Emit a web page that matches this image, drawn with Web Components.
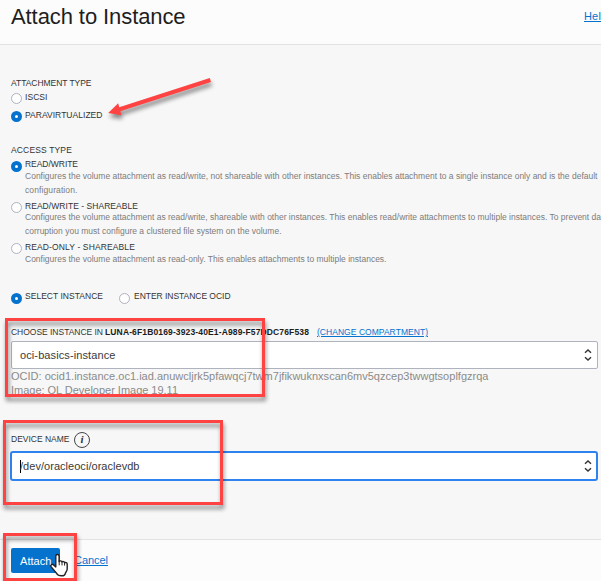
<!DOCTYPE html>
<html lang="en"><head><meta charset="utf-8"><title>Attach to Instance</title>
<style>
html,body{margin:0;width:601px;height:581px;overflow:hidden}
body{font-family:"Liberation Sans",Arial,sans-serif;background:#f7f7f7;color:#333}
</style></head><body>
<attach-dialog></attach-dialog>
<script>
const define=(name,html,setup)=>customElements.define(name,class extends HTMLElement{
  connectedCallback(){
    if(this.shadowRoot)return;
    this.attachShadow({mode:'open'}).innerHTML=html;
    if(setup)setup(this,this.shadowRoot);
  }
});
/* Single line of text, tracked to the width given in "w". */
define('fit-text',`<style>:host{display:inline-block;white-space:nowrap;vertical-align:top}</style><slot></slot>`,(el)=>{
  const w=+el.getAttribute('w');
  if(w){const n=el.textContent.length;el.style.letterSpacing=((w-el.getBoundingClientRect().width)/n).toFixed(4)+'px';}
});
define('ui-radio',`<style>
:host{display:grid;grid-template-columns:14px max-content;font-size:8.5px;line-height:12px;color:#333}
i{box-sizing:border-box;width:11px;height:11px;border-radius:50%;border:1px solid #adb3be;background:#fff;margin-top:var(--dot,2px)}
:host([checked]) i{border:4px solid #0572ce}
.note{display:flex;flex-direction:column;align-items:flex-start;line-height:14px;color:#7c7c7c;margin-top:var(--note,-1px)}
</style><i></i><div><slot></slot><div class="note"><slot name="note"></slot></div></div>`);
define('ui-select',`<style>
:host{display:flex;box-sizing:border-box;align-items:center;justify-content:space-between;width:587px;height:28px;padding:0 5px 0 8px;border:1px solid #aeb3bd;border-radius:2px;background:#fff;font-size:11px;color:#3a3a3a}
:host([focused]){width:588px;height:30px;border:2px solid #2f83ef;border-radius:3px;padding-right:4px}
:host([focused]) span{border-left:1px solid #000;line-height:13px}
:host([focused]) ::slotted(*){margin-left:-1px}
svg{display:block}
</style><span><slot></slot></span><svg width="8" height="14" viewBox="0 0 8 14" fill="none" stroke="#333" stroke-width="1.4"><path d="M1 4.8 4 2 7 4.8M1 9.2 4 12 7 9.2"/></svg>`);
define('ui-link',`<style>:host{display:inline-block;color:#0572ce}
:host,::slotted(*){text-decoration:underline;text-decoration-thickness:1px;text-underline-offset:1px}</style><slot></slot>`);
define('ui-button',`<style>:host{display:flex;box-sizing:border-box;width:49px;height:25px;align-items:center;padding-left:9px;background:#0572ce;color:#fff;border-radius:2px;font-size:11px}</style><slot></slot>`);
define('info-icon',`<style>:host{display:block;width:16px;height:16px}span{display:block;box-sizing:border-box;width:16px;height:16px;border:1px solid #444;border-radius:50%;text-align:center;font:italic bold 11px/13px "Liberation Serif",serif;color:#333}</style><span>i</span>`);
/* Call-out boxes, arrow and hand pointer that lie over the dialog. */
define('callout-layer',`<style>:host{position:absolute;inset:0;pointer-events:none}svg{display:block}</style>
<svg width="601" height="581" viewBox="0 0 601 581">
<defs><filter id="s" color-interpolation-filters="sRGB" filterUnits="userSpaceOnUse" x="-10" y="0" width="620" height="600"><feDropShadow dx="1" dy="4" stdDeviation="2" flood-color="#000" flood-opacity=".45"/></filter></defs>
<g fill="none" stroke="#ff4343" stroke-width="3">
<rect filter="url(#s)" x="6.5" y="319.5" width="257" height="76"/>
<rect filter="url(#s)" x="4.5" y="421.5" width="217" height="82"/>
<rect filter="url(#s)" x="4.5" y="534.5" width="71" height="45"/></g>
<path filter="url(#s)" fill="#ff4343" d="M108.2 113 118.2 103.3 119.2 107.2 209.8 78 211 82 120.3 111.2 121.5 115.2Z"/>
<path d="M55.8 556.2c0-2.3 3.3-2.3 3.3 0v5.4c.5-1.1 2.6-.9 2.9.3.7-.8 2.3-.4 2.6.8.9-.6 2.6 0 2.6 1.4v4.6c0 2.3-1.3 3.2-1.8 4.6-.3 2-1.7 2.5-3.8 2.5-2.6 0-4-.4-4.9-2.3l-5.5-6.6c-1.2-1.7.8-3.4 2.4-2l2.2 2Z" fill="#fff" stroke="#222" stroke-width="1.4" stroke-linejoin="round"/>
<path d="M59.2 560.5v4.8M62 562v3.4M64.6 562.8v2.8" stroke="#222" stroke-width="1"/>
</svg>`);
define('attach-dialog',`<style>
:host{display:flex;flex-direction:column;position:relative;width:601px;height:581px;overflow:hidden;font-size:8.5px;line-height:12px}
header{box-sizing:border-box;height:45px;flex:none;background:#fcfcfc;border-bottom:1px solid #e3e3e3;padding:3px 0 0 11px;display:flex}
h1{margin:0;font-weight:400;font-size:22px;line-height:27px;color:#1e1e1e;flex:0 0 573px}
header ui-link{font-size:11px;line-height:13px;margin-top:7px;white-space:nowrap}
main{height:494px;flex:none;box-sizing:border-box;padding:32px 0 0 11px;display:flex;flex-direction:column;align-items:flex-start}
.h{height:12px;flex:none}
main>*{flex:none}
.access{margin-top:23px}
.r{height:12px}
.tabs{display:flex;width:300px;height:12px}
.row{display:flex;height:12px}
.meta{height:28px;font-size:11px;line-height:14px;color:#8b8b8b;overflow:hidden}
footer{box-sizing:border-box;height:42px;border-top:1px solid #e3e3e3;background:#fcfcfc;padding:8px 0 0 11px;display:flex;font-size:11px}
footer ui-link{margin:6px 0 0 14px;line-height:13px}
b{color:#1b1b1b}
</style>
<header><h1><fit-text w="174.5">Attach to Instance</fit-text></h1><ui-link><fit-text w="17">Hel</fit-text></ui-link></header>
<main>
<div class="h"><fit-text w="80.5">ATTACHMENT TYPE</fit-text></div>
<ui-radio class="r" style="margin-top:2px"><fit-text w="22.5">ISCSI</fit-text></ui-radio>
<ui-radio class="r" checked style="margin-top:6px"><fit-text w="77.5">PARAVIRTUALIZED</fit-text></ui-radio>
<div class="h access"><fit-text w="61">ACCESS TYPE</fit-text></div>
<ui-radio checked style="margin-top:2px;height:39px;--dot:3px"><fit-text w="53">READ/WRITE</fit-text>
<fit-text slot="note" w="572.5">Configures the volume attachment as read/write, not shareable with other instances. This enables attachment to a single instance only and is the default</fit-text><fit-text slot="note" w="52.5">configuration.</fit-text></ui-radio>
<ui-radio style="margin-top:3px;height:38px;--note:-2px"><fit-text w="113">READ/WRITE - SHAREABLE</fit-text>
<fit-text slot="note" w="576">Configures the volume attachment as read/write, shareable with other instances. This enables read/write attachments to multiple instances. To prevent da</fit-text><fit-text slot="note" w="256.5">corruption you must configure a clustered file system on the volume.</fit-text></ui-radio>
<ui-radio style="margin-top:3px;height:25px"><fit-text w="110">READ-ONLY - SHAREABLE</fit-text>
<fit-text slot="note" w="361.5">Configures the volume attachment as read-only. This enables attachments to multiple instances.</fit-text></ui-radio>
<div class="tabs" style="margin-top:24px"><ui-radio checked style="width:108px;--dot:3px"><fit-text w="78">SELECT INSTANCE</fit-text></ui-radio><ui-radio style="--dot:3px;grid-template-columns:15px max-content"><fit-text w="96.5">ENTER INSTANCE OCID</fit-text></ui-radio></div>
<div class="row" style="margin-top:24px"><fit-text w="92">CHOOSE INSTANCE IN</fit-text><b style="margin-left:2px"><fit-text w="204">LUNA-6F1B0169-3923-40E1-A989-F57DDC76F538</fit-text></b><ui-link style="margin-left:8px"><fit-text w="111">(CHANGE COMPARTMENT)</fit-text></ui-link></div>
<ui-select style="margin-top:3px"><fit-text w="95.5">oci-basics-instance</fit-text></ui-select>
<div class="meta"><fit-text w="477.5">OCID: ocid1.instance.oc1.iad.anuwcljrk5pfawqcj7twm7jfikwuknxscan6mv5qzcep3twwgtsoplfgzrqa</fit-text><br><fit-text w="167">Image: OL Developer Image 19.11</fit-text></div>
<div class="row" style="margin-top:36px"><fit-text w="58.5">DEVICE NAME</fit-text><info-icon style="margin:-1px 0 0 4.5px"></info-icon></div>
<ui-select focused style="margin:6px 0 0 -1px"><fit-text w="119.5">/dev/oracleoci/oraclevdb</fit-text></ui-select>
</main>
<footer><ui-button><fit-text w="31.5">Attach</fit-text></ui-button><ui-link><fit-text w="34">Cancel</fit-text></ui-link></footer>
<callout-layer></callout-layer>`);
</script></body></html>
